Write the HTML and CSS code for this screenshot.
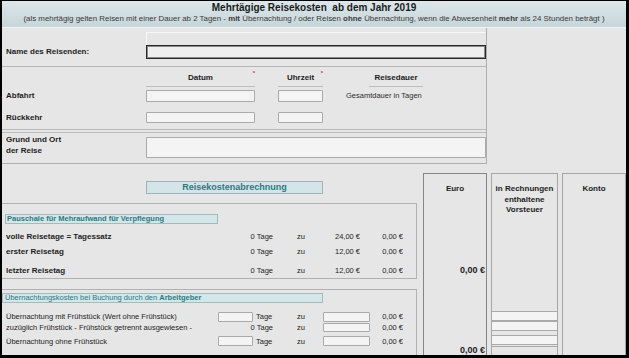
FILE: index.html
```html
<!DOCTYPE html>
<html lang="de">
  <head>
    <meta charset="utf-8" />
    <meta name="viewport" content="width=device-width, initial-scale=1.0" />
    <title>Mehrtägige Reisekosten</title>
    <link rel="stylesheet" href="styles.css">
  </head>

  <body>
    <div class="frame">
      <header class="title-bar">
        <h1>Mehrtägige Reisekosten&nbsp; ab dem Jahr 2019</h1>
        <p>
          (als mehrtägig gelten Reisen mit einer Dauer ab 2 Tagen - <b>mit</b> Übernachtung / oder
          Reisen <b>ohne</b> Übernachtung, wenn die Abwesenheit <b>mehr</b> als 24 Stunden beträgt )
        </p>
      </header>

      <section class="traveller">
        <div class="name-row">
          <div class="name-hint"></div>
          <label class="label" for="travellerName">Name des Reisenden:</label>
          <input id="travellerName" class="field field-name" type="text" />
        </div>

        <div class="times">
          <div></div>
          <div class="col-head">Datum<span class="req">*</span></div>
          <div></div>
          <div class="col-head">Uhrzeit<span class="req">*</span></div>
          <div><div class="col-head duration-head">Reisedauer</div></div>

          <div class="label">Abfahrt</div>
          <input class="field field-tall" type="text" />
          <div></div>
          <input class="field field-tall" type="text" />
          <div class="note">Gesamtdauer in Tagen</div>

          <div class="label">Rückkehr</div>
          <input class="field" type="text" />
          <div></div>
          <input class="field" type="text" />
          <div></div>
        </div>

        <div class="double-rule"></div>

        <div class="reason">
          <div class="label">Grund und Ort<br />der Reise</div>
          <input class="field field-reason" type="text" />
        </div>
      </section>

      <div class="accounting">
        <div class="sections">
          <div class="calc-bar">
            <div class="calc-btn">Reisekostenabrechnung</div>
          </div>

          <section class="block block-meals">
            <h2 class="block-title block-title-bold">Pauschale für Mehraufwand für Verpflegung</h2>
            <div class="line line-meal">
              <div class="label">volle Reisetage = Tagessatz</div>
              <div class="days">0 Tage</div>
              <div class="zu">zu</div>
              <div class="rate">24,00 €</div>
              <div class="sum">0,00 €</div>
            </div>
            <div class="line line-meal">
              <div class="label">erster Reisetag</div>
              <div class="days">0 Tage</div>
              <div class="zu">zu</div>
              <div class="rate">12,00 €</div>
              <div class="sum">0,00 €</div>
            </div>
            <div class="line line-meal line-last">
              <div class="label">letzter Reisetag</div>
              <div class="days">0 Tage</div>
              <div class="zu">zu</div>
              <div class="rate">12,00 €</div>
              <div class="sum">0,00 €</div>
            </div>
          </section>

          <section class="block block-hotel">
            <h2 class="block-title">Übernachtungskosten bei Buchung durch den <b>Arbeitgeber</b></h2>
            <div class="line line-hotel">
              <div class="text">Übernachtung mit Frühstück (Wert ohne Frühstück)</div>
              <input class="field field-days" type="text" />
              <div class="unit">Tage</div>
              <div class="zu">zu</div>
              <input class="field field-rate" type="text" />
              <div class="sum">0,00 €</div>
            </div>
            <div class="line line-hotel line-tight">
              <div class="text">zuzüglich Frühstück - Frühstück getrennt ausgewiesen -</div>
              <div class="days">0 Tage</div>
              <div class="zu">zu</div>
              <input class="field field-rate" type="text" />
              <div class="sum">0,00 €</div>
            </div>
            <div class="line line-hotel line-gap">
              <div class="text">Übernachtung ohne Frühstück</div>
              <input class="field field-days" type="text" />
              <div class="unit">Tage</div>
              <div class="zu">zu</div>
              <input class="field field-rate" type="text" />
              <div class="sum">0,00 €</div>
            </div>
          </section>
        </div>

        <div class="col col-euro">
          <div class="col-title">Euro</div>
          <div class="total total-meals">0,00 €</div>
          <div class="total total-hotel">0,00 €</div>
        </div>

        <div class="col col-tax">
          <div class="col-title">in Rechnungen<br />enthaltene<br />Vorsteuer</div>
          <div class="tax-fields">
            <input class="field strip" type="text" />
            <input class="field strip" type="text" />
            <input class="field strip strip-gap" type="text" />
            <div class="strip-rule"></div>
          </div>
        </div>

        <div class="col col-account">
          <div class="col-title">Konto</div>
        </div>
      </div>
    </div>
  </body>
</html>
```

FILE: styles.css
```css
* {
  box-sizing: border-box;
}

body {
  margin: 0;
  font-family: "Liberation Sans", Arial, sans-serif;
  font-size: 7.5px;
  color: #1d1d1d;
}

.frame {
  width: 629px;
  height: 358px;
  border-style: solid;
  border-color: #000;
  border-width: 1px 3px 3px 2px;
  background: #e6e6e6;
  display: flex;
  flex-direction: column;
  overflow: hidden;
}

.title-bar {
  height: 27px;
  flex: none;
  padding-top: 1px;
  text-align: center;
  background: linear-gradient(#dce7ea, #c6d5d9);
  border-bottom: 1px solid #f3f6f7;
}

.title-bar h1 {
  margin: 0;
  font-size: 10px;
  line-height: 11px;
  color: #1b1b1b;
}

.title-bar p {
  margin: 1px 0 0;
  font-size: 7.9px;
  line-height: 10px;
  color: #3a3a3a;
}

.label {
  font-size: 8px;
  font-weight: bold;
  padding-left: 4px;
}

.field {
  display: block;
  margin: 0;
  padding: 0;
  width: 100%;
  height: 11px;
  border: 1px solid #aaaaaa;
  border-radius: 1px;
  background: #f4f4f4;
  font: inherit;
}

.field-tall {
  height: 12px;
}

/* top panel */

.traveller {
  width: 485px;
  flex: none;
  border-right: 1px solid #adadad;
  border-bottom: 1px solid #b0b0b0;
}

.name-row {
  display: grid;
  grid-template-columns: 144px 1fr;
  grid-template-rows: 13px 14px;
  height: 39px;
  padding-top: 4px;
  border-bottom: 1px solid #b6b6b6;
}

.name-hint {
  grid-column: 2;
  border-top: 1px solid #f7f7f7;
  border-left: 1px solid #f7f7f7;
}

.name-row .label {
  grid-column: 1;
  line-height: 14px;
}

.field-name {
  height: 14px;
  border: 1px solid #262626;
  border-radius: 0;
  box-shadow: inset 0 0 0 1px #8d8d8d;
  background: #efefef;
}

.times {
  display: grid;
  grid-template-columns: 144px 109px 23px 45px 1fr;
  grid-template-rows: 23px 22px 11px;
  align-items: start;
  height: 62px;
}

.times .label {
  line-height: 12px;
}

.times .label:nth-last-child(5) {
  line-height: 11px;
}

.col-head {
  position: relative;
  height: 20px;
  padding-top: 5px;
  line-height: 11px;
  font-size: 8px;
  font-weight: bold;
  text-align: center;
  border-bottom: 1px solid #bdbdbd;
}

.req {
  position: absolute;
  top: 3px;
  right: 0;
  font-size: 6px;
  line-height: 6px;
  color: #d23a3a;
}

.duration-head {
  width: 54px;
  margin-left: 46px;
}

.note {
  margin-left: 23px;
  line-height: 12px;
  color: #2c2c2c;
}

.double-rule {
  height: 4px;
  border-top: 1px solid #bbbbbb;
  border-bottom: 1px solid #bbbbbb;
}

.reason {
  display: grid;
  grid-template-columns: 144px 1fr;
  align-items: start;
  height: 30px;
  padding-top: 1px;
}

.reason .label {
  line-height: 11px;
}

.field-reason {
  height: 21px;
  margin-top: 3px;
}

/* accounting area */

.accounting {
  flex: 1;
  display: grid;
  grid-template-columns: 417px 64px 67px 64px;
  column-gap: 4px;
}

.sections {
  display: flex;
  flex-direction: column;
}

.calc-bar {
  height: 39px;
  padding: 17px 0 0 144px;
}

.calc-btn {
  width: 177px;
  height: 13px;
  line-height: 11px;
  font-size: 9px;
  font-weight: bold;
  text-align: center;
  color: #2a7b80;
  background: #d3e5e9;
  border: 1px solid #a2b3b7;
}

.block {
  width: 415px;
  border-top: 1px solid #b1b1b1;
  border-right: 1px solid #b1b1b1;
}

.block-meals {
  height: 76px;
  padding-top: 10px;
  border-bottom: 1px solid #b1b1b1;
  margin-bottom: 10px;
}

.block-hotel {
  flex: 1;
  padding-top: 3px;
}

.block-title {
  margin: 0;
  height: 10px;
  padding-left: 2px;
  font-size: 7.5px;
  font-weight: normal;
  line-height: 8px;
  color: #2a7b80;
  background: #d3e6ea;
  border: 1px solid #a6babe;
}

.block-title-bold {
  width: 213px;
  margin-left: 3px;
  padding-left: 1px;
  font-weight: bold;
}

.block-hotel .block-title {
  width: 321px;
}

.line {
  display: grid;
  grid-template-columns: 212px 35px 21px 49px 47px 34px;
  align-items: center;
  padding-left: 4px;
}

.line .label {
  padding-left: 0;
}

.line-meal {
  height: 15px;
}

.line-meal:first-of-type {
  margin-top: 5px;
}

.line-last {
  height: 16px;
  align-items: end;
}

.days {
  grid-column: 2 / 4;
  text-align: right;
  padding-right: 1px;
}

.unit {
  padding-left: 3px;
}

.zu {
  grid-column: 4;
  padding-left: 23px;
}

.rate {
  text-align: right;
  padding-right: 10px;
}

.sum {
  grid-column: 6;
  text-align: right;
  padding-right: 1px;
}

.line-hotel {
  height: 11px;
}

.line-hotel:first-of-type {
  margin-top: 8px;
}

.line-tight {
  height: 10px;
  margin-top: 0;
}

.line-gap {
  height: 10px;
  margin-top: 4px;
}

.field-days {
  height: 10px;
}

.line-hotel .field-rate {
  grid-column: 5;
  height: 10px;
}

.line-tight .field-rate {
  height: 9px;
}

/* right columns */

.col {
  margin-top: 9px;
  display: flex;
  flex-direction: column;
  border: 1px solid #a6a6a6;
  border-bottom: none;
  text-align: center;
}

.col-euro {
  border-color: #868686;
}

.col-title {
  padding-top: 10px;
  font-size: 8px;
  font-weight: bold;
  line-height: 10.5px;
}

.total {
  font-size: 9px;
  font-weight: bold;
  line-height: 10px;
  text-align: right;
  padding-right: 1px;
}

.total-meals {
  margin-top: 70px;
}

.total-hotel {
  margin-top: auto;
}

.tax-fields {
  margin-top: auto;
  padding-bottom: 8px;
}

.strip {
  height: 10px;
  border-radius: 0;
  border-left: none;
  border-right: none;
}

.strip-gap {
  margin-top: 4px;
}

.strip-rule {
  margin-top: 1px;
  border-top: 1px solid #a8a8a8;
}
```
